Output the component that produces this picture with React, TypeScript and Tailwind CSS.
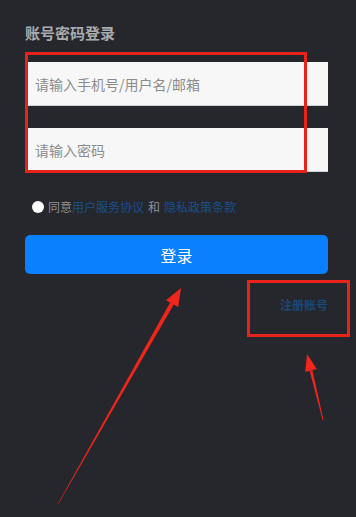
export default function App() {
  return (
    <div className="relative h-[517px] w-[356px] overflow-hidden bg-[#25272c] pl-[25px] pr-[28px] pt-[24px] font-['Noto_Sans_CJK_SC',sans-serif]">
      <h1 className="text-[15px] font-bold leading-[18px] text-[#a9abae]">账号密码登录</h1>

      <div className="mt-[20px] flex flex-col gap-[22px]">
        <input
          placeholder="请输入手机号/用户名/邮箱"
          className="h-[44px] w-full border-b border-[#cfd0d2] bg-[#f7f7f7] px-[10px] text-[14px] text-[#333] outline-none placeholder:text-[#8c8c8c]"
        />
        <input
          type="password"
          placeholder="请输入密码"
          className="h-[44px] w-full border-b border-[#cfd0d2] bg-[#f7f7f7] px-[10px] text-[14px] text-[#333] outline-none placeholder:text-[#8c8c8c]"
        />
      </div>

      <div className="ml-[7px] mt-[28px] flex h-[14px] items-center text-[12px] leading-[14px] text-[#8f9194]">
        <span className="mr-[4px] h-[12px] w-[12px] rounded-full bg-white"></span>
        <span>同意</span>
        <span className="text-[#1a4f8e]">用户服务协议</span>
        <span className="mx-[4px]">和</span>
        <span className="text-[#1a4f8e]">隐私政策条款</span>
      </div>

      <button className="mt-[21px] flex h-[39px] w-full items-center justify-center rounded-[5px] bg-[#0a80ff] text-[16px] text-white">
        登录
      </button>

      <div className="mt-[23px] text-right text-[12px] font-bold leading-[16px] text-[#1c4878]">注册账号</div>

      {/* annotation overlay */}
      <div className="pointer-events-none absolute left-[25px] top-[52px] h-[121px] w-[282px] border-[3px] border-[#e8231b]"></div>
      <div className="pointer-events-none absolute left-[247px] top-[280px] h-[57px] w-[103px] border-[3px] border-[#e8231b]"></div>
      <svg className="pointer-events-none absolute inset-0" width="356" height="517" viewBox="0 0 356 517">
        <polygon points="57.6,504.2 58.4,503.8 173.9,304.3 170.3,302.3" fill="#f0251b" />
        <polygon points="181,288 166,300.2 178.2,307.1" fill="#f0251b" />
        <polygon points="309.6,370.8 312.4,370.2 323.5,420 322.6,420.1" fill="#f0251b" />
        <polygon points="307,354 305.2,371.9 316.8,369.1" fill="#f0251b" />
      </svg>
    </div>
  );
}
